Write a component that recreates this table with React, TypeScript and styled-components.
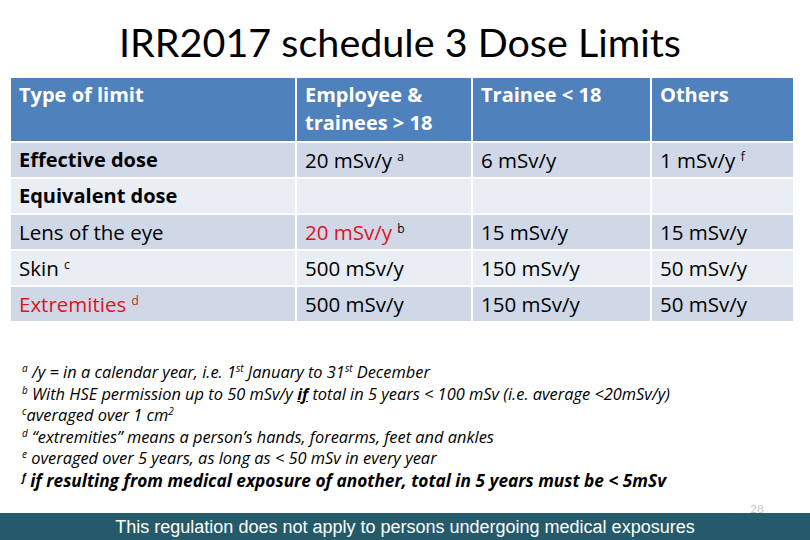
import React from "react";
import styled, { createGlobalStyle } from "styled-components";

const Global = createGlobalStyle`
  html, body { margin: 0; padding: 0; background: #ffffff; }
  body { width: 810px; height: 540px; overflow: hidden; font-family: "Open Sans", Lato, sans-serif; }
`;

const Slide = styled.div`
  width: 810px;
  height: 540px;
  display: flex;
  flex-direction: column;
  background: #ffffff;
`;

const Title = styled.h1`
  margin: 18px 0 12px;
  padding-right: 10px;
  height: 48px;
  font-family: Lato, sans-serif;
  font-weight: 400;
  font-size: 39.5px;
  line-height: 48px;
  text-align: center;
  color: #000000;
`;

const Table = styled.div`
  margin-left: 11px;
  width: 782px;
  display: grid;
  grid-template-columns: 284px 174px 177px 141px;
  grid-template-rows: 63px repeat(5, 34px);
  gap: 2px;
  font-family: "Open Sans", sans-serif;
`;

const HeadCell = styled.div`
  background: #4f81bd;
  color: #ffffff;
  font-weight: 700;
  font-size: 20px;
  line-height: 28px;
  padding: 3px 8px 0;
`;

const Cell = styled.div<{ $alt?: boolean; $bold?: boolean; $red?: boolean }>`
  background: ${(p) => (p.$alt ? "#e9edf4" : "#d0d8e8")};
  color: ${(p) => (p.$red ? "#dc1420" : "#000000")};
  font-weight: ${(p) => (p.$bold ? 700 : 400)};
  font-size: ${(p) => (p.$bold ? "20px" : "20.5px")};
  line-height: 34px;
  padding: 0 8px;
  white-space: nowrap;
`;

const Sup = styled.sup`
  font-size: 12px;
  vertical-align: 7px;
  line-height: 0;
`;

const Notes = styled.div`
  margin-top: 40px;
  padding-left: 22px;
  font-family: "Open Sans", sans-serif;
  font-style: italic;
  color: #000000;
`;

const NoteLine = styled.div<{ $strong?: boolean }>`
  white-space: nowrap;
  font-weight: ${(p) => (p.$strong ? 700 : 400)};
  font-size: ${(p) => (p.$strong ? "17.3px" : "16.4px")};
  line-height: ${(p) => (p.$strong ? "23px" : "21.6px")};
`;

const NSup = styled.sup`
  font-size: 10px;
  vertical-align: 6px;
  line-height: 0;
`;

const Under = styled.span`
  font-weight: 700;
  text-decoration: underline;
`;

const FooterWrap = styled.div`
  margin-top: auto;
  position: relative;
  z-index: 0;
`;

const Footer = styled.div`
  height: 27px;
  background: #245a69;
  color: #ffffff;
  font-family: "Liberation Sans", Arial, sans-serif;
  font-size: 18px;
  line-height: 27px;
  text-align: center;
  padding-top: 1px;
  box-sizing: border-box;
`;

const PageNo = styled.span`
  position: absolute;
  right: 46px;
  top: -10px;
  font-family: Lato, sans-serif;
  font-size: 12px;
  line-height: 12px;
  color: #c8c8c8;
  z-index: -1;
`;

export default function App() {
  return (
    <>
      <Global />
      <Slide>
        <Title>IRR2017 schedule 3 Dose Limits</Title>
        <Table>
          <HeadCell>Type of limit</HeadCell>
          <HeadCell>Employee &amp; trainees &gt; 18</HeadCell>
          <HeadCell>Trainee &lt; 18</HeadCell>
          <HeadCell>Others</HeadCell>

          <Cell $bold>Effective dose</Cell>
          <Cell>
            20 mSv/y <Sup>a</Sup>
          </Cell>
          <Cell>6 mSv/y</Cell>
          <Cell>
            1 mSv/y <Sup>f</Sup>
          </Cell>

          <Cell $alt $bold>Equivalent dose</Cell>
          <Cell $alt />
          <Cell $alt />
          <Cell $alt />

          <Cell>Lens of the eye</Cell>
          <Cell>
            <span style={{ color: "#dc1420" }}>20 mSv/y</span> <Sup>b</Sup>
          </Cell>
          <Cell>15 mSv/y</Cell>
          <Cell>15 mSv/y</Cell>

          <Cell $alt>
            Skin <Sup>c</Sup>
          </Cell>
          <Cell $alt>500 mSv/y</Cell>
          <Cell $alt>150 mSv/y</Cell>
          <Cell $alt>50 mSv/y</Cell>

          <Cell $red>
            Extremities <Sup>d</Sup>
          </Cell>
          <Cell>500 mSv/y</Cell>
          <Cell>150 mSv/y</Cell>
          <Cell>50 mSv/y</Cell>
        </Table>

        <Notes>
          <NoteLine>
            <NSup>a</NSup> /y = in a calendar year, i.e. 1<NSup>st</NSup> January to 31
            <NSup>st</NSup> December
          </NoteLine>
          <NoteLine>
            <NSup>b</NSup> With HSE permission up to 50 mSv/y <Under>if</Under> total in 5 years &lt; 100 mSv
            (i.e. average &lt;20mSv/y)
          </NoteLine>
          <NoteLine>
            <NSup>c</NSup>averaged over 1 cm<NSup>2</NSup>
          </NoteLine>
          <NoteLine>
            <NSup>d</NSup> “extremities” means a person’s hands, forearms, feet and ankles
          </NoteLine>
          <NoteLine>
            <NSup>e</NSup> overaged over 5 years, as long as &lt; 50 mSv in every year
          </NoteLine>
          <NoteLine $strong>
            <NSup>f</NSup> if resulting from medical exposure of another, total in 5 years must be &lt; 5mSv
          </NoteLine>
        </Notes>

        <FooterWrap>
          <PageNo>28</PageNo>
          <Footer>This regulation does not apply to persons undergoing medical exposures</Footer>
        </FooterWrap>
      </Slide>
    </>
  );
}
